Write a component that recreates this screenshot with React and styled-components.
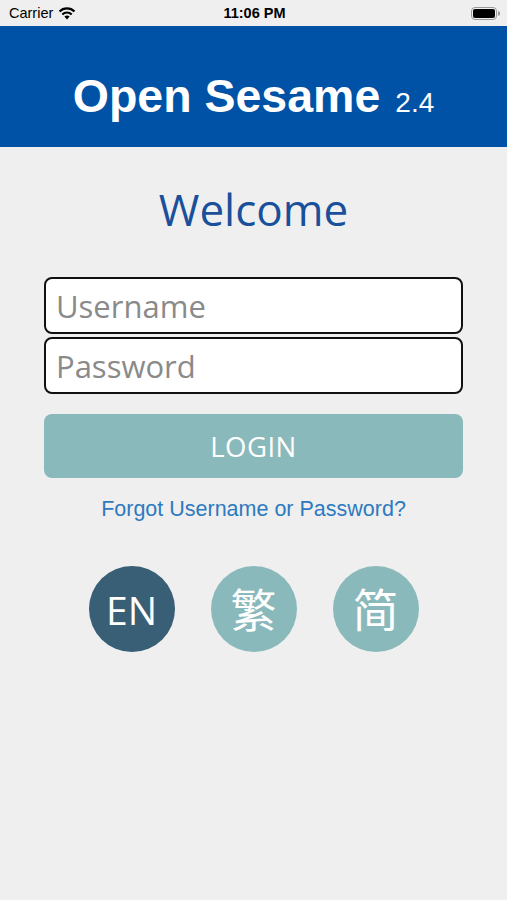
import React from "react";
import styled, { createGlobalStyle } from "styled-components";

const GlobalStyle = createGlobalStyle`
  html, body {
    margin: 0;
    padding: 0;
    background: #efefef;
  }
  * {
    box-sizing: border-box;
  }
`;

const Screen = styled.div`
  width: 507px;
  height: 900px;
  background: #efefef;
  display: flex;
  flex-direction: column;
  font-family: "Liberation Sans", Arial, sans-serif;
`;

const StatusBar = styled.div`
  height: 26px;
  display: grid;
  grid-template-columns: 1fr auto 1fr;
  align-items: center;
  padding: 0 7px 0 9px;
  font-size: 14.5px;
  color: #000;
`;

const Carrier = styled.div`
  display: flex;
  align-items: center;
  gap: 5px;
`;

const Clock = styled.div`
  font-weight: 700;
`;

const Battery = styled.div`
  justify-self: end;
  display: flex;
  align-items: center;
`;

const Header = styled.header`
  height: 121px;
  background: #0052a6;
  display: flex;
  justify-content: center;
  align-items: flex-end;
  padding-bottom: 28px;
  color: #fff;
`;

const Title = styled.h1`
  margin: 0;
  font-size: 46.5px;
  font-weight: 700;
  line-height: 1;
  display: flex;
  align-items: baseline;
  gap: 15px;
`;

const Version = styled.span`
  font-size: 28px;
  font-weight: 400;
`;

const Body = styled.main`
  display: flex;
  flex-direction: column;
  align-items: center;
  padding: 0 44px;
`;

const Welcome = styled.h2`
  margin: 34px 0 0;
  font-family: "Open Sans", sans-serif;
  font-weight: 400;
  font-size: 44px;
  line-height: 56px;
  color: #1a4f9c;
`;

const Form = styled.div`
  width: 100%;
  margin-top: 40px;
  display: flex;
  flex-direction: column;
  gap: 3px;
`;

const Field = styled.input`
  width: 100%;
  height: 57px;
  border: 2px solid #111;
  border-radius: 8px;
  background: #fff;
  padding: 0 10px;
  font-family: "Open Sans", sans-serif;
  font-size: 31px;
  color: #333;
  outline: none;
  &::placeholder {
    color: #8a8a8a;
  }
`;

const LoginButton = styled.button`
  width: 100%;
  height: 64px;
  margin-top: 20px;
  border: none;
  border-radius: 8px;
  background: #8ab9bb;
  color: #fff;
  font-family: "Open Sans", sans-serif;
  font-size: 27.5px;
  letter-spacing: 0.5px;
`;

const Forgot = styled.a`
  margin-top: 19px;
  font-size: 21.5px;
  color: #2d7ac0;
  text-decoration: none;
`;

const Languages = styled.div`
  margin-top: 44px;
  display: flex;
  gap: 36px;
`;

const LangButton = styled.button`
  width: 86px;
  height: 86px;
  border-radius: 50%;
  border: none;
  padding: 0;
  background: ${(p) => (p.active ? "#395f76" : "#8ab9bb")};
  color: #fff;
  font-family: "Open Sans", "Noto Sans CJK TC", "Noto Sans CJK SC", sans-serif;
  font-size: ${(p) => (p.cjk ? "46px" : "39px")};
  display: flex;
  align-items: center;
  justify-content: center;
  line-height: 1;
`;

function Wifi() {
  return (
    <svg width="18" height="13" viewBox="0 0 18 13">
      <path d="M9 12.5 L6.4 9.6 A3.8 3.8 0 0 1 11.6 9.6 Z" fill="#000" />
      <path
        d="M4.3 7.4 A6.6 6.6 0 0 1 13.7 7.4"
        stroke="#000"
        strokeWidth="2.1"
        fill="none"
      />
      <path
        d="M1.5 4.5 A10.6 10.6 0 0 1 16.5 4.5"
        stroke="#000"
        strokeWidth="2.1"
        fill="none"
      />
    </svg>
  );
}

function BatteryIcon() {
  return (
    <svg width="29" height="13" viewBox="0 0 29 13">
      <rect x="0.5" y="0.5" width="25" height="12" rx="3.5" fill="none" stroke="#999" />
      <rect x="2" y="2" width="22" height="9" rx="2" fill="#000" />
      <path d="M27 4.3 A2 2 0 0 1 27 8.7 Z" fill="#999" />
    </svg>
  );
}

export default function App() {
  return (
    <>
      <GlobalStyle />
      <Screen>
        <StatusBar>
          <Carrier>
            Carrier <Wifi />
          </Carrier>
          <Clock>11:06 PM</Clock>
          <Battery>
            <BatteryIcon />
          </Battery>
        </StatusBar>
        <Header>
          <Title>
            Open Sesame <Version>2.4</Version>
          </Title>
        </Header>
        <Body>
          <Welcome>Welcome</Welcome>
          <Form>
            <Field placeholder="Username" />
            <Field placeholder="Password" type="password" />
          </Form>
          <LoginButton>LOGIN</LoginButton>
          <Forgot href="#">Forgot Username or Password?</Forgot>
          <Languages>
            <LangButton active>EN</LangButton>
            <LangButton cjk lang="zh-Hant">繁</LangButton>
            <LangButton cjk lang="zh-Hans">简</LangButton>
          </Languages>
        </Body>
      </Screen>
    </>
  );
}
